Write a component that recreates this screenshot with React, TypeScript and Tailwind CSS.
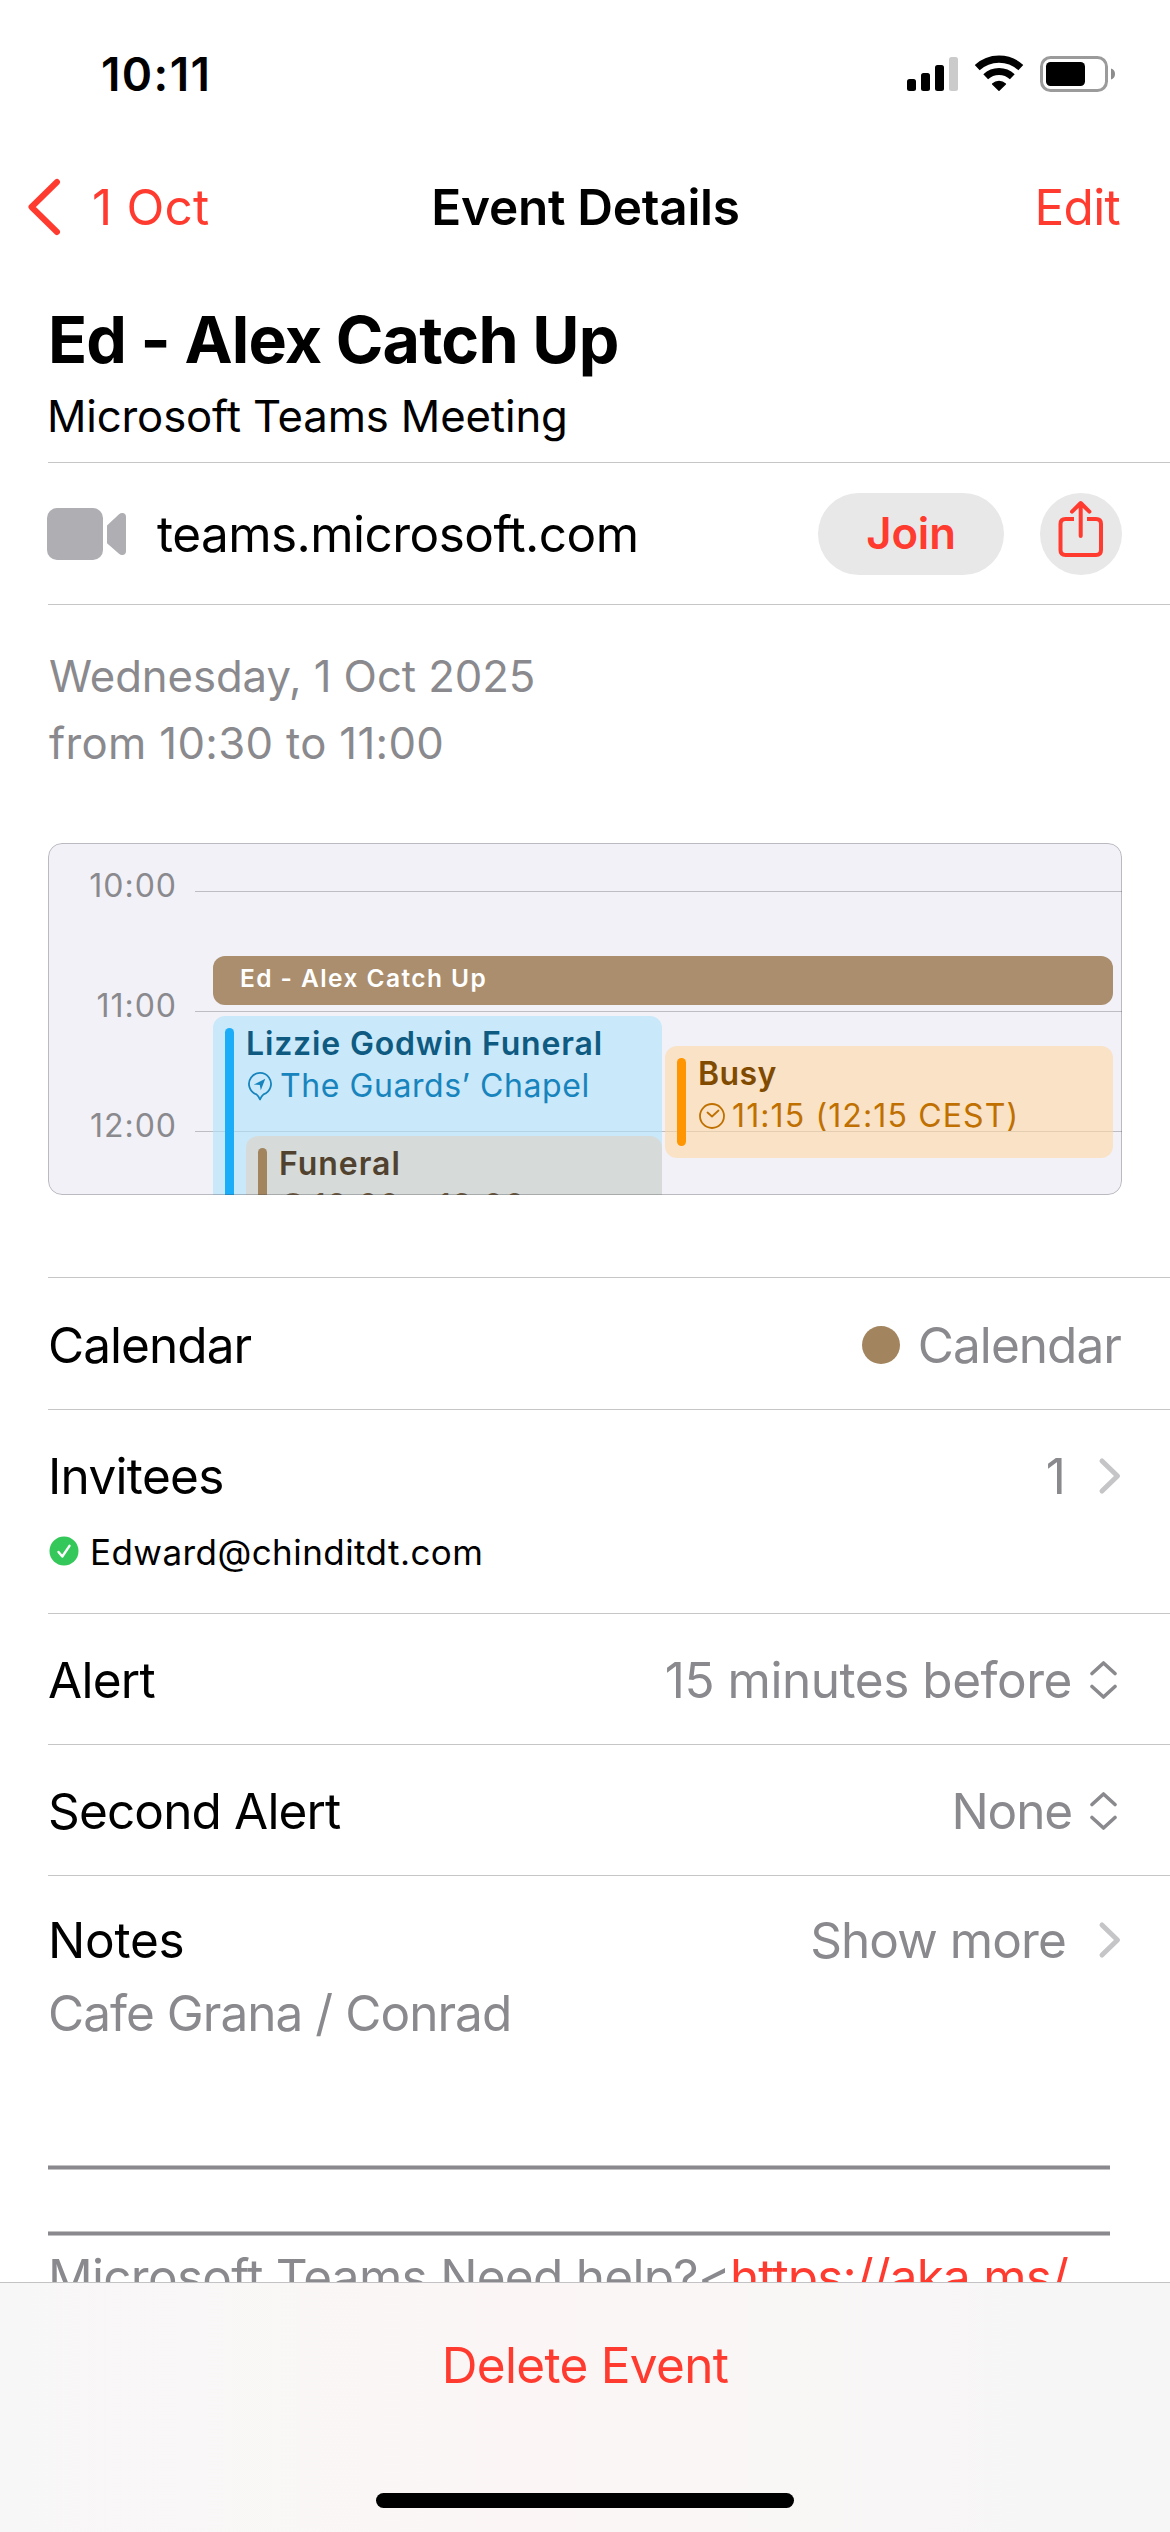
import type { ReactNode } from 'react';
import clsx from 'clsx';

const HOURS = ['10:00', '11:00', '12:00'];

function SignalIcon() {
  return (
    <svg width="51" height="38" viewBox="0 0 51 38">
      <rect x="0" y="24" width="9" height="12" rx="2.5" />
      <rect x="14" y="18" width="9" height="18" rx="2.5" />
      <rect x="28" y="10" width="9" height="26" rx="2.5" />
      <rect x="42" y="2" width="9" height="34" rx="2.5" fill="#cbcbcb" />
    </svg>
  );
}

function WifiIcon() {
  return (
    <svg width="50" height="38" viewBox="0 0 50 38" fill="none" stroke="#000">
      <path d="M3.2 12.6A32 32 0 0 1 46.8 12.6" strokeWidth="7.2" />
      <path d="M11.7 21.7A19.5 19.5 0 0 1 38.3 21.7" strokeWidth="7" />
      <path d="M25 35.3 18.6 29A9.4 9.4 0 0 1 31.4 29Z" fill="#000" strokeWidth="1.4" strokeLinejoin="round" />
    </svg>
  );
}

function BatteryIcon() {
  return (
    <svg width="75" height="38" viewBox="0 0 75 38">
      <rect x="1.5" y="2.5" width="65" height="33" rx="9" fill="none" stroke="#9b9b9b" strokeWidth="3" />
      <rect x="6" y="7" width="39" height="24" rx="4.5" />
      <path d="M71 13.5v11c2.6-.6 4-2.8 4-5.5s-1.4-4.900-4-5.500Z" fill="#8c8c8c" />
    </svg>
  );
}

function BackIcon() {
  return (
    <svg width="34" height="58" viewBox="0 0 34 58" fill="none" stroke="#ff3b30" strokeWidth="6" strokeLinecap="round" strokeLinejoin="round">
      <path d="M30 4 4.5 29 30 54" />
    </svg>
  );
}

function VideoIcon() {
  return (
    <svg width="80" height="52" viewBox="0 0 80 52" fill="#aeaeb3">
      <rect width="56" height="52" rx="10" />
      <path d="M60 17.5V35.3L72 45.8Q74 47.5 76 47 79 46.3 79 43V9Q79 5.7 76 5 74 4.5 72 6.2Z" />
    </svg>
  );
}

function ShareIcon() {
  return (
    <svg width="82" height="82" viewBox="0 0 82 82" fill="none" stroke="#ff3b30" strokeWidth="4">
      <path d="M34 26H25.5Q20.5 26 20.5 31V57Q20.5 62 25.5 62H56Q61 62 61 57V31Q61 26 56 26H47" />
      <path d="M40.7 10.5V43M32 18.7 40.7 10 49.4 18.7" strokeLinecap="round" strokeLinejoin="round" />
    </svg>
  );
}

function PinIcon() {
  return (
    <svg className="ml-[2px] mr-[8px]" width="24" height="30" viewBox="0 0 24 30" fill="none" stroke="currentColor" strokeWidth="1.8">
      <path d="M8.5 23.4A11 11 0 1 1 15.5 23.4Q13.5 25 12 28.5 10.5 25 8.5 23.4Z" strokeLinejoin="round" />
      <path d="M5.8 13.6 17.3 7.8 12.8 19.3 11.8 14Z" fill="currentColor" stroke="none" />
    </svg>
  );
}

function ClockIcon() {
  return (
    <svg className="ml-[1px] mr-[7px]" width="26" height="28" viewBox="0 0 26 28" fill="none" stroke="currentColor" strokeWidth="1.8">
      <circle cx="13" cy="14" r="12" />
      <path d="M8.5 10.5 13 14.5 19.5 8.5" strokeLinecap="round" strokeLinejoin="round" />
    </svg>
  );
}

function ChevronIcon() {
  return (
    <svg width="24" height="38" viewBox="0 0 24 38" fill="none" stroke="#c5c5c7" strokeWidth="5" strokeLinecap="round" strokeLinejoin="round">
      <path d="M4 4 19.5 19 4 34" />
    </svg>
  );
}

function UpDownIcon() {
  return (
    <svg width="28" height="40" viewBox="0 0 28 40" fill="none" stroke="#8a8a8e" strokeWidth="3.6" strokeLinecap="round" strokeLinejoin="round">
      <path d="M3 13.5 14.5 3 26 13.5M3 26.5 14.5 37 26 26.5" />
    </svg>
  );
}

function AcceptedIcon() {
  return (
    <svg width="30" height="30" viewBox="0 0 30 30">
      <circle cx="15" cy="15" r="14.5" fill="#34c759" />
      <path d="M9.5 16 13.3 20.5 20.5 9.8" fill="none" stroke="#fff" strokeWidth="2.4" strokeLinecap="round" strokeLinejoin="round" />
    </svg>
  );
}

interface EventBlockProps {
  title: string;
  detail: string;
  icon: ReactNode;
  className: string;
  barClass: string;
  titleClass: string;
  detailClass: string;
}

function EventBlock({ title, detail, icon, className, barClass, titleClass, detailClass }: EventBlockProps) {
  return (
    <div className={clsx('absolute flex whitespace-nowrap rounded-[12px] pl-[12px]', className)}>
      <div className={clsx('my-[12px] w-[9px] shrink-0 rounded-full', barClass)} />
      <div className="ml-[12px] pt-[7px] text-[32px] leading-[42px]">
        <div className={clsx('font-semibold', titleClass)}>{title}</div>
        <div className={clsx('flex items-center', detailClass)}>
          {icon}
          <span>{detail}</span>
        </div>
      </div>
    </div>
  );
}

function DayPreview() {
  return (
    <div className="relative mx-12 mt-[66px] h-[352px] overflow-hidden rounded-[14px] bg-[#f2f1f7] pt-6">
      {HOURS.map((hour) => (
        <div key={hour} className="flex h-[120px] items-start">
          <span className="w-[129px] text-right text-[32px] leading-[37px] tracking-[1px] text-[#8a8a8e]">{hour}</span>
          <div className="ml-[18px] mt-6 h-px flex-1 bg-[#bebdc3]" />
        </div>
      ))}

      <div className="absolute left-[165px] top-[113px] h-[49px] w-[900px] rounded-[12px] bg-[#aa8e6e] pl-[27px] text-[24.5px] font-semibold leading-[44px] tracking-[1.43px] text-white">
        Ed - Alex Catch Up
      </div>
      <EventBlock
        title="Lizzie Godwin Funeral"
        detail="The Guards’ Chapel"
        icon={<PinIcon />}
        className="left-[165px] top-[173px] h-[220px] w-[449px] bg-[#aee2fa]/60"
        barClass="bg-[#1badf8]"
        titleClass="tracking-[0.84px] text-[#0e5a81]"
        detailClass="tracking-[0.56px] text-[#1784bd]"
      />
      <EventBlock
        title="Funeral"
        detail="12:00 – 13:00"
        icon={<ClockIcon />}
        className="left-[198px] top-[293px] h-[160px] w-[416px] bg-[#d6dbda]"
        barClass="bg-[#a2845e]"
        titleClass="tracking-[0.97px] text-[#51422f]"
        detailClass="tracking-[1.1px] text-[#6b583f]"
      />
      <EventBlock
        title="Busy"
        detail="11:15 (12:15 CEST)"
        icon={<ClockIcon />}
        className="left-[617px] top-[203px] h-[112px] w-[448px] bg-[#fed8a5]/60"
        barClass="bg-[#ff9500]"
        titleClass="tracking-[0.38px] text-[#804b00]"
        detailClass="tracking-[1.12px] text-[#bf7000]"
      />
      <div className="pointer-events-none absolute inset-0 rounded-[14px] border border-[#3c3c43]/30" />
    </div>
  );
}

export default function App() {
  return (
    <div className="h-[2532px] w-[1170px] overflow-hidden bg-white font-['Inter',sans-serif] text-black">
      <main className="h-[2282px] overflow-hidden">
        <div className="flex h-[148px] items-center justify-between pl-[101px] pr-[55px]">
          <span className="text-[46px] font-semibold tracking-[1.4px]">10:11</span>
          <div className="flex items-center gap-[16px]">
            <SignalIcon />
            <WifiIcon />
            <BatteryIcon />
          </div>
        </div>

        <nav className="grid h-[118px] grid-cols-[1fr_auto_1fr] items-center pl-[27px] pr-[50px] text-[49.5px]">
          <div className="flex items-center text-[#ff3b30]">
            <BackIcon />
            <span className="ml-[31px] tracking-[0.2px]">1 Oct</span>
          </div>
          <h1 className="ml-[24px] font-semibold tracking-[-0.27px]">Event Details</h1>
          <span className="text-right tracking-[-0.68px] text-[#ff3b30]">Edit</span>
        </nav>

        <header className="ml-12 border-b border-[#c6c6c8] pb-[18px] pt-[35px]">
          <h2 className="text-[64.5px] font-bold leading-[79px] tracking-[-0.83px]">Ed - Alex Catch Up</h2>
          <p className="-ml-px mt-[10px] text-[43.7px] leading-[54px] tracking-[-0.15px]">Microsoft Teams Meeting</p>
        </header>

        <div className="ml-12 h-[142px] border-b border-[#c6c6c8] pr-12 pt-[30px]">
          <div className="flex h-[82px] items-center">
            <div className="-ml-px">
              <VideoIcon />
            </div>
            <span className="ml-[30px] flex-1 text-[49.5px] tracking-[-0.55px]">teams.microsoft.com</span>
            <button className="h-[82px] w-[186px] rounded-full bg-[#e8e8e8] text-[43.7px] font-semibold tracking-[-0.12px] text-[#ff3b30]">
              Join
            </button>
            <button className="ml-9 size-[82px] rounded-full bg-[#e8e8e8]">
              <ShareIcon />
            </button>
          </div>
        </div>

        <div className="ml-[49px] mt-[39px] text-[43.7px] leading-[66.5px] text-[#8a8a8e]">
          <p className="tracking-[-0.08px]">Wednesday, 1 Oct 2025</p>
          <p className="tracking-[0.33px]">from 10:30 to 11:00</p>
        </div>

        <DayPreview />

        <section className="ml-12 mt-[82px] border-t border-[#c6c6c8] text-[49.5px] leading-[60px]">
          <div className="flex h-[132px] items-center justify-between border-b border-[#c6c6c8] pr-[49px] pt-[3px]">
            <span className="tracking-[-0.95px]">Calendar</span>
            <div className="flex items-center text-[#8a8a8e]">
              <div className="mr-[18px] size-[38px] rounded-full bg-[#a2845e]" />
              <span className="tracking-[-0.95px]">Calendar</span>
            </div>
          </div>

          <div className="h-[204px] border-b border-[#c6c6c8] pr-12 pt-9">
            <div className="flex items-center">
              <span className="flex-1 tracking-[-0.69px]">Invitees</span>
              <span className="mr-8 text-[#8a8a8e]">1</span>
              <ChevronIcon />
            </div>
            <div className="mt-6 flex h-[44px] items-center text-[35px] leading-[44px] tracking-[0.44px]">
              <div className="mb-[3px] ml-px">
                <AcceptedIcon />
              </div>
              <span className="ml-[11px]">Edward@chinditdt.com</span>
            </div>
          </div>

          <div className="flex h-[131px] items-center border-b border-[#c6c6c8] pr-[53px] pt-[2px]">
            <span className="flex-1 tracking-[-0.73px]">Alert</span>
            <span className="mr-[17px] tracking-[-0.46px] text-[#8a8a8e]">15 minutes before</span>
            <UpDownIcon />
          </div>

          <div className="flex h-[131px] items-center border-b border-[#c6c6c8] pr-[53px] pt-[2px]">
            <span className="flex-1 tracking-[-0.85px]">Second Alert</span>
            <span className="mr-[17px] tracking-[-1.14px] text-[#8a8a8e]">None</span>
            <UpDownIcon />
          </div>

          <div className="pt-[34px]">
            <div className="flex items-center pr-12">
              <span className="flex-1 tracking-[-0.24px]">Notes</span>
              <span className="mr-8 tracking-[-0.9px] text-[#8a8a8e]">Show more</span>
              <ChevronIcon />
            </div>
            <div className="mt-[10px] leading-[66px] text-[#8a8a8e]">
              <p className="tracking-[-0.96px]">Cafe Grana / Conrad</p>
              <div className="mt-[119px] h-[5px] w-[1062px] border-y border-[#c2c2c4] bg-[#8a8a8e]" />
              <div className="mt-[61px] h-[5px] w-[1062px] border-y border-[#c2c2c4] bg-[#8a8a8e]" />
              <p className="mt-2 whitespace-nowrap tracking-[-0.72px]">
                Microsoft Teams Need help?&lt;
                <span className="tracking-[-0.88px] text-[#ff3b30]">https://aka.ms/</span>
              </p>
            </div>
          </div>
        </section>
      </main>

      <footer className="flex h-[250px] flex-col items-center border-t border-[#c3c2c4] bg-linear-to-r from-[#f8f7f8] from-0% via-[#fbf6f5] via-45% to-[#f6f6f7] pt-[52px]">
        <button className="text-[49.5px] leading-[60px] tracking-[-0.71px] text-[#ff3b30]">Delete Event</button>
        <div className="mt-[98px] h-[15px] w-[418px] rounded-full bg-black" />
      </footer>
    </div>
  );
}
